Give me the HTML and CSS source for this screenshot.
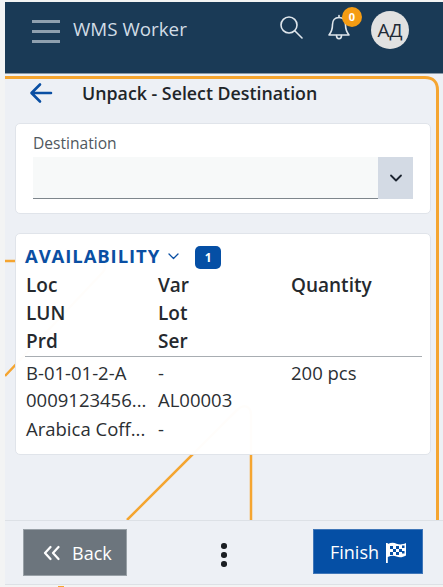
FILE: index.html
```html
<!DOCTYPE html>
<html lang="en">
<head>
<meta charset="utf-8">
<title>WMS Worker</title>
<link rel="stylesheet" href="styles.css">
</head>
<body>
<div class="app">
  <header class="topbar">
    <div class="burger"><span></span><span></span><span></span></div>
    <div class="brand">WMS Worker</div>
    <div class="top-actions">
      <svg class="search" width="24" height="24" viewBox="0 0 24 24" fill="none" stroke="#dfe6ec" stroke-width="1.600" stroke-linecap="round"><circle cx="9" cy="9" r="8"/><path d="M15 15l7 7"/></svg>
      <div class="bell">
        <svg width="24" height="28" viewBox="0 0 24 28" fill="none" stroke="#dfe6ec" stroke-width="1.600" stroke-linejoin="round" stroke-linecap="round"><path d="M12 3.500c-4.300 0-6.500 3.200-6.500 7 0 5-1 7.500-3.500 10.500h20c-2.500-3-3.500-5.500-3.500-10.500 0-3.800-2.200-7-6.500-7z"/><path d="M12 1.500v2M9.500 21.500c0 2.200 1.100 3.200 2.500 3.200s2.500-1 2.500-3.200"/></svg>
        <span class="bell-badge">0</span>
      </div>
      <div class="avatar">АД</div>
    </div>
  </header>
  <main class="stage">
    <svg class="wires" width="438" height="446" viewBox="0 0 438 446" fill="none" stroke="#f5a530">
      <path d="M0 3.500H420c8 0 12.500 4.500 12.500 12.500V446" stroke-width="3"/>
      <path d="M0 187H92c8 0 10 6 6 11L0 302" stroke-width="2.500"/>
      <path d="M122 446L232 336c8-7 14-3 14 5V446" stroke-width="2.500"/>
    </svg>
    <div class="page-title">
      <svg class="back-arrow" width="24" height="22" viewBox="0 0 24 22" fill="none" stroke="#0a4fa3" stroke-width="2.600" stroke-linecap="round" stroke-linejoin="round"><path d="M22 11H3M11 2.500L2.500 11l8.500 8.500"/></svg>
      <h1>Unpack - Select Destination</h1>
    </div>
    <section class="card dest-card">
      <label class="field-label">Destination</label>
      <div class="select">
        <div class="select-input"></div>
        <div class="select-btn">
          <svg width="14" height="9" viewBox="0 0 14 9" fill="none" stroke="#1c2430" stroke-width="1.800" stroke-linecap="round" stroke-linejoin="round"><path d="M2 1.500l5 5 5-5"/></svg>
        </div>
      </div>
    </section>
    <section class="card avail-card">
      <div class="avail-head">
        <span class="avail-title">AVAILABILITY</span>
        <svg class="avail-chev" width="11" height="7" viewBox="0 0 11 7" fill="none" stroke="#0a4fa3" stroke-width="1.300" stroke-linecap="round" stroke-linejoin="round"><path d="M1 1l4.500 4.500L10 1"/></svg>
        <span class="count">1</span>
      </div>
      <div class="grid grid-head">
        <div>Loc</div><div>Var</div><div>Quantity</div>
        <div>LUN</div><div>Lot</div><div></div>
        <div>Prd</div><div>Ser</div><div></div>
      </div>
      <div class="grid grid-body">
        <div>B-01-01-2-A</div><div>-</div><div>200 pcs</div>
        <div>0009123456...</div><div>AL00003</div><div></div>
        <div>Arabica Coff...</div><div>-</div><div></div>
      </div>
    </section>
  </main>
  <footer class="actions">
    <button class="btn btn-back">
      <svg width="17" height="16" viewBox="0 0 17 16" fill="none" stroke="#fff" stroke-width="2.200" stroke-linecap="round" stroke-linejoin="round"><path d="M7.500 2L2 8l5.500 6M15.500 2L10 8l5.500 6"/></svg>
      <span>Back</span>
    </button>
    <div class="kebab"><i></i><i></i><i></i></div>
    <button class="btn btn-finish">
      <span>Finish</span>
      <svg width="22" height="24" viewBox="0 0 22 24"><path fill="#fff" d="M1 3h1.800v1C6 2.500 9 2.500 11.500 3.700c3 1.200 6 1 9.500-.7v12.500c-3.500 2-6.500 2.200-9.500 1-2.500-1.200-5.500-1-8.700.5V23H1z"/><path fill="#054fa5" d="M5 6h3v3H5zM11 6h3v3h-3zM17 5.500h2.500V8H17zM8 9h3v3H8zM14 9h3v3h-3zM5 12h3v3H5zM11 12h3v3h-3zM17 11h2.500v2.500H17z"/></svg>
    </button>
  </footer>
  <div class="strip"><span class="strip-dot"></span></div>
</div>
</body>
</html>
```
FILE: styles.css
```css
* { box-sizing: border-box; }
html, body { margin: 0; height: 100%; }
body { font-family: "Open Sans", "Noto Sans", sans-serif; background: #f3f4f4; color: #212529; overflow: hidden; }
.app { width: 443px; height: 587px; padding: 2px 0 0 5px; display: flex; flex-direction: column; }

.topbar { height: 72px; flex: none; background: #1a3a56; border-bottom: 1px solid #8a9aa8; display: flex; align-items: flex-start; }
.burger { width: 28px; margin: 18px 0 0 27px; display: flex; flex-direction: column; gap: 7.500px; }
.burger span { height: 2.500px; background: #8fa0af; }
.brand { margin: 14px 0 0 13px; font-size: 18.800px; line-height: 26px; color: #d2dde6; }
.top-actions { margin-left: auto; display: flex; align-items: flex-start; }
.search { margin: 14px 0 0 0; }
.bell { position: relative; margin: 12px 0 0 23px; width: 24px; height: 28px; }
.bell-badge { position: absolute; left: 15px; top: -7px; width: 20px; height: 20px; border-radius: 50%; background: #f59c13; color: #fff; font-size: 11px; font-weight: 700; line-height: 20px; text-align: center; }
.avatar { width: 38px; height: 38px; margin: 9px 34px 0 20px; border-radius: 50%; background: #e1e1e1; color: #1f2a36; font-size: 19px; line-height: 38px; text-align: center; }

.stage { position: relative; flex: 1; min-height: 0; background: #edf0f5; padding: 0 12px 0 10px; }
.wires { position: absolute; left: 0; top: 0; }
.page-title { position: relative; display: flex; align-items: center; height: 49px; padding: 0 0 12px 14px; }
.back-arrow { flex: none; }
h1 { margin: 0 0 0 29px; font-size: 17.800px; font-weight: 600; line-height: 24px; color: #212529; }

.card { position: relative; background: rgba(255, 255, 255, 0.98); border: 1px solid #e0e4ea; border-radius: 5px; }
.dest-card { height: 91px; padding: 8px 17px 0; }
.field-label { display: block; font-size: 15.600px; line-height: 22px; color: #505860; }
.select { display: flex; height: 42px; margin-top: 3px; }
.select-input { flex: 1; background: #f7f9f9; border-bottom: 1px solid #7e868c; }
.select-btn { width: 35px; background: #d3dae4; display: flex; align-items: center; justify-content: center; }

.avail-card { height: 222px; margin-top: 19px; padding: 9px 8px 0 9px; }
.avail-head { display: flex; align-items: center; height: 25px; }
.avail-title { font-size: 18.500px; font-weight: 700; letter-spacing: 0.900px; color: #0a4fa3; line-height: 23px; }
.avail-chev { margin-left: 8px; margin-top: 2px; }
.count { margin-left: 16px; margin-top: 4px; width: 26px; height: 23px; border-radius: 5px; background: #054fa5; color: #fff; font-size: 12px; font-weight: 700; line-height: 23px; text-align: center; }

.grid { display: grid; grid-template-columns: 132px 133px 1fr; }
.grid > div { padding-left: 1px; white-space: nowrap; }
.grid-head { font-size: 19px; margin-top: 3px; padding-bottom: 1px; border-bottom: 1px solid #a8adb2; font-weight: 600; grid-auto-rows: 28px; line-height: 28px; color: #25292e; }
.grid-body { font-size: 18.500px; grid-template-rows: 27px 29px 30px; line-height: 28px; padding-top: 2px; color: #2b2f33; }

.actions { height: 65px; flex: none; background: #edf0f5; border-top: 1px solid #dde1e6; border-bottom: 1px solid #dde1e6; display: flex; align-items: flex-start; justify-content: space-between; padding: 8px 20px 0 18px; }
.btn { font-family: inherit; font-size: 18px; color: #fff; display: flex; align-items: center; padding: 0; }
.btn-back { width: 104px; height: 47px; background: #6c757d; border: 1px solid #98a0a6; gap: 12px; padding-left: 19px; }
.btn-finish { width: 110px; height: 45px; background: #054fa5; border: 1px solid #3f76b8; gap: 6px; padding-left: 16px; }
.kebab { display: flex; flex-direction: column; gap: 3.500px; margin: 14px 0 0 8px; }
.kebab i { width: 5.500px; height: 5.500px; border-radius: 50%; background: #1a1e22; }
.strip { height: 2px; flex: none; padding: 1px 0 0 53px; line-height: 0; }
.strip-dot { display: block; width: 6px; height: 1px; background: #f5a530; }
```
